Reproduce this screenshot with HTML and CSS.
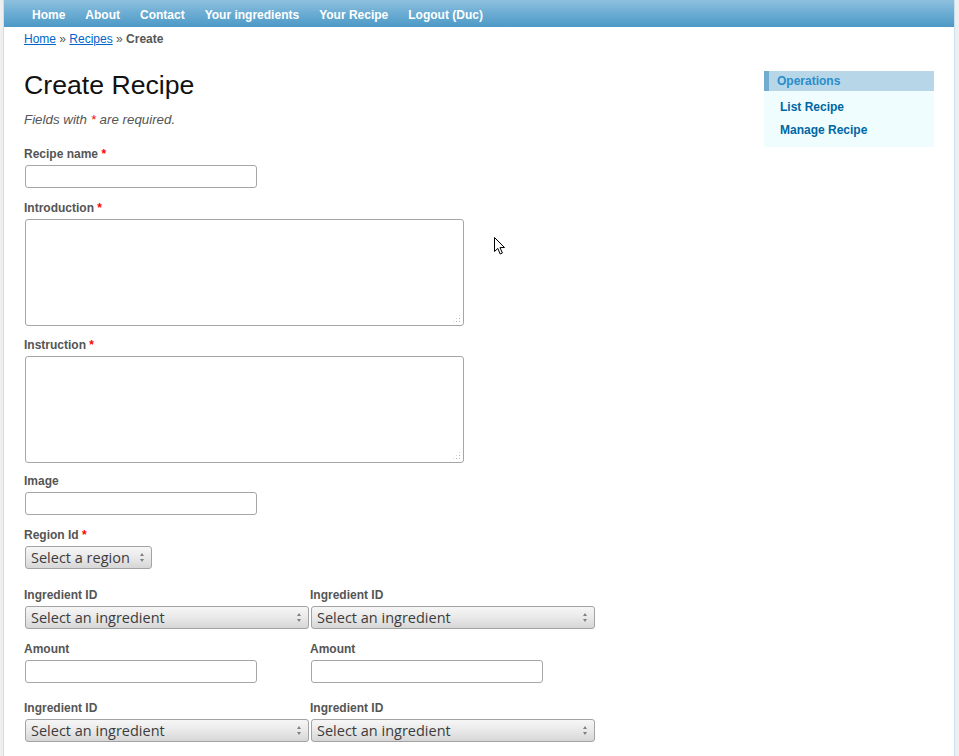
FILE: index.html
```html
<!DOCTYPE html>
<html lang="en">
<head>
<meta charset="utf-8">
<title>Create Recipe</title>
<link rel="stylesheet" href="styles.css">
</head>
<body>
<div class="page">
  <nav class="mainmenu">
    <ul>
      <li><a href="#">Home</a></li>
      <li><a href="#">About</a></li>
      <li><a href="#">Contact</a></li>
      <li><a href="#">Your ingredients</a></li>
      <li><a href="#">Your Recipe</a></li>
      <li><a href="#">Logout (Duc)</a></li>
    </ul>
  </nav>
  <div class="breadcrumbs"><a href="#">Home</a> &raquo; <a href="#">Recipes</a> &raquo; <span>Create</span></div>
  <div class="main">
    <div class="content">
      <h1>Create Recipe</h1>
      <form class="form">
        <p class="note">Fields with <span class="required">*</span> are required.</p>
        <div class="row">
          <label>Recipe name <span class="required">*</span></label>
          <input type="text" class="text">
        </div>
        <div class="row row-intro">
          <label>Introduction <span class="required">*</span></label>
          <div class="area-wrap"><textarea></textarea><span class="grip"></span></div>
        </div>
        <div class="row row-instr">
          <label>Instruction <span class="required">*</span></label>
          <div class="area-wrap"><textarea></textarea><span class="grip"></span></div>
        </div>
        <div class="row">
          <label>Image</label>
          <input type="text" class="text">
        </div>
        <div class="row row-region">
          <label>Region Id <span class="required">*</span></label>
          <div class="select-wrap region"><select><option>Select a region</option></select></div>
        </div>
        <div class="group">
          <div class="col">
            <div class="row">
              <label>Ingredient ID</label>
              <div class="select-wrap ingredient"><select><option>Select an ingredient</option></select></div>
            </div>
            <div class="row">
              <label>Amount</label>
              <input type="text" class="text">
            </div>
          </div>
          <div class="col">
            <div class="row">
              <label>Ingredient ID</label>
              <div class="select-wrap ingredient"><select><option>Select an ingredient</option></select></div>
            </div>
            <div class="row">
              <label>Amount</label>
              <input type="text" class="text">
            </div>
          </div>
        </div>
        <div class="group">
          <div class="col">
            <div class="row">
              <label>Ingredient ID</label>
              <div class="select-wrap ingredient"><select><option>Select an ingredient</option></select></div>
            </div>
          </div>
          <div class="col">
            <div class="row">
              <label>Ingredient ID</label>
              <div class="select-wrap ingredient"><select><option>Select an ingredient</option></select></div>
            </div>
          </div>
        </div>
      </form>
    </div>
    <aside class="sidebar">
      <div class="portlet">
        <div class="portlet-decoration"><div class="portlet-title">Operations</div></div>
        <div class="portlet-content">
          <ul class="operations">
            <li><a href="#">List Recipe</a></li>
            <li><a href="#">Manage Recipe</a></li>
          </ul>
        </div>
      </div>
    </aside>
  </div>
</div>
<svg class="cursor" width="13" height="20" viewBox="0 0 13 20">
  <path d="M1.5 1.5 L1.5 15.5 L4.8 12.4 L7.2 18 L9.4 17 L7 11.6 L11.5 11.5 Z" fill="#fff" stroke="#000" stroke-width="1" stroke-linejoin="miter"/>
</svg>
</body>
</html>
```

FILE: styles.css
```css
html, body {
  margin: 0;
  padding: 0;
}

body {
  background: #efefef;
  color: #555;
  font: normal 13.33px/1.5 "Liberation Sans", Arial, sans-serif;
  position: relative;
}

.page {
  width: 950px;
  margin: 0 0 0 3px;
  background: #fff;
  border-left: 1px solid #c9e0ed;
  border-right: 1px solid #c9e0ed;
  min-height: 800px;
}

/* main menu */
.mainmenu {
  background: linear-gradient(to bottom, #8fc0de 0%, #6eaed4 45%, #4c99c6 100%);
  height: 27px;
}

.mainmenu ul {
  list-style: none;
  margin: 0;
  padding: 2px 20px 0;
  box-sizing: border-box;
  display: flex;
  gap: 4px;
  height: 27px;
  align-items: center;
}

.mainmenu a {
  display: block;
  padding: 0 8px;
  color: #fff;
  font-size: 12px;
  font-weight: bold;
  text-decoration: none;
  line-height: 16px;
}

/* breadcrumbs */
.breadcrumbs {
  font-size: 12px;
  line-height: 16px;
  padding: 4px 20px;
  color: #555;
}

.breadcrumbs a {
  color: #06c;
  text-decoration: underline;
}

.breadcrumbs span {
  font-weight: bold;
}

/* layout */
.main {
  display: flex;
}

.content {
  width: 720px;
  padding: 21px 20px 20px;
}

.sidebar {
  width: 170px;
  padding: 20px 20px 20px 0;
}

h1 {
  margin: 0 0 12px;
  font-size: 26.67px;
  line-height: 27px;
  font-weight: normal;
  color: #111;
}

/* form */
.form {
  margin: 0;
}

.note {
  margin: 0 0 18px;
  font-style: italic;
  line-height: 18px;
}

.required {
  color: red;
}

.row {
  margin-bottom: 13px;
}

.row-intro {
  margin-bottom: 12px;
}

.row-instr {
  margin-bottom: 11px;
}

.row-region {
  margin-bottom: 14px;
}

.row label {
  display: block;
  font-weight: bold;
  font-size: 12px;
  line-height: 14px;
  margin-bottom: 4px;
  color: #555;
}

input.text {
  display: block;
  box-sizing: border-box;
  width: 232px;
  height: 23px;
  margin: 0 0 0 1px;
  border: 1px solid #a6a6a6;
  border-radius: 3px;
  background: #fff;
  padding: 2px 4px;
  font: 13px "Open Sans", sans-serif;
}

.area-wrap {
  position: relative;
  width: 439px;
  height: 107px;
  margin-left: 1px;
}

textarea {
  display: block;
  box-sizing: border-box;
  width: 439px;
  height: 107px;
  margin: 0;
  border: 1px solid #a6a6a6;
  border-radius: 3px;
  resize: none;
  background: #fff;
  font: 13px "Liberation Mono", monospace;
}

.grip {
  position: absolute;
  right: 3px;
  bottom: 3px;
  width: 9px;
  height: 9px;
  background:
    radial-gradient(circle, #b5b5b5 0.6px, transparent 0.9px) 0 0 / 3px 3px;
  clip-path: polygon(100% 0, 100% 100%, 0 100%);
}

.select-wrap {
  position: relative;
  margin-left: 1px;
  height: 23px;
}

.select-wrap.region {
  width: 127px;
}

.select-wrap.ingredient {
  width: 284px;
}

.select-wrap select {
  appearance: none;
  -webkit-appearance: none;
  display: block;
  box-sizing: border-box;
  width: 100%;
  height: 23px;
  margin: 0;
  border: 1px solid #a3a3a3;
  border-radius: 3px;
  background: linear-gradient(to bottom, #f6f6f6 0%, #e9e9e9 50%, #d6d6d6 100%);
  color: #3c3c3c;
  font: 14.5px/21px "Open Sans", "DejaVu Sans", sans-serif;
  padding: 0 20px 0 5px;
}

.select-wrap::before,
.select-wrap::after {
  content: "";
  position: absolute;
  right: 8px;
  width: 0;
  height: 0;
  border-left: 2.5px solid transparent;
  border-right: 2.5px solid transparent;
  pointer-events: none;
}

.select-wrap::before {
  top: 7px;
  border-bottom: 3px solid #808080;
}

.select-wrap::after {
  top: 13px;
  border-top: 3px solid #808080;
}

.group {
  display: grid;
  grid-template-columns: 286px 286px;
  padding-top: 5px;
}

/* sidebar portlet */
.portlet-decoration {
  padding: 3px 8px;
  background: #b7d6e7;
  border-left: 5px solid #6facd0;
}

.portlet-title {
  font-size: 12px;
  font-weight: bold;
  line-height: 14px;
  color: #298dcd;
}

.portlet-content {
  background: #effdff;
  padding: 5px 8px;
}

.operations {
  list-style: none;
  margin: 0;
  padding: 0;
}

.operations a {
  display: block;
  padding: 4px 0 4px 8px;
  font-size: 12px;
  line-height: 15px;
  font-weight: bold;
  color: #0066a4;
  text-decoration: none;
}

.cursor {
  position: absolute;
  left: 493px;
  top: 236px;
}
```
